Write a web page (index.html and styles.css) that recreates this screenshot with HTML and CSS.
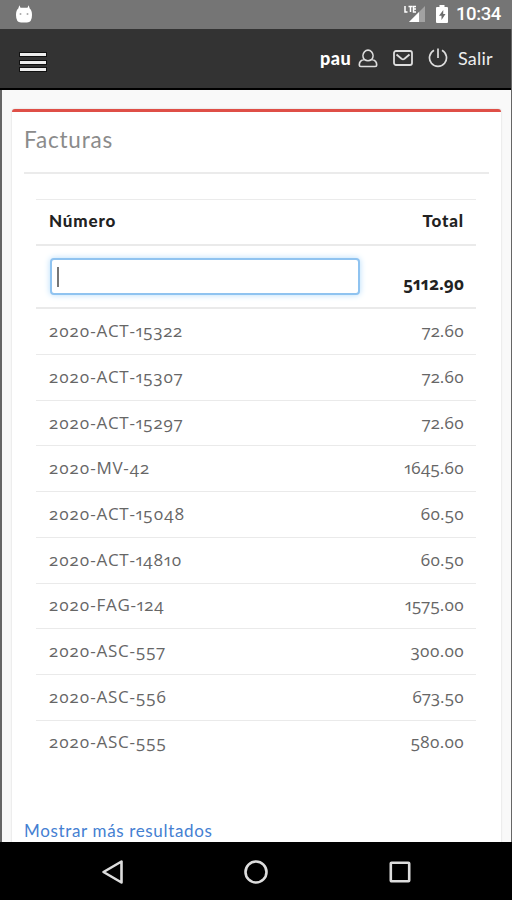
FILE: index.html
```html
<!DOCTYPE html>
<html lang="es">
<head>
<meta charset="utf-8">
<title>Facturas</title>
<link rel="stylesheet" href="styles.css">
</head>
<body>
<div class="phone">
  <div class="status">
    <svg class="bot" viewBox="0 0 18 20"><path d="M4.300 1.200l1.200 2.500h7l1.200-2.500 1 3.300Q17 6 17 11q0 7.500-5 7.500H6Q1 18.500 1 11 1 6 3.300 4.500z" fill="#fff"/><circle cx="5.500" cy="10" r="1" fill="#aaa"/><circle cx="12.500" cy="10" r="1" fill="#aaa"/></svg>
    <div class="status-right">
      <svg class="signal" viewBox="0 0 22 18"><path d="M1 1v6h2.500M4.500 1.500h4M6.500 1.500V7M12 1.500H9.500V7H12M9.500 4H12" fill="none" stroke="#fff" stroke-width="1.500"/><path d="M21 1v16H5z" fill="#a2a2a2"/><path d="M15 7v10H5z" fill="#fff"/></svg>
      <svg class="battery" viewBox="0 0 12 18"><path d="M3.500 0h5v2H11q1 0 1 1v14q0 1-1 1H1q-1 0-1-1V3q0-1 1-1h2.500z" fill="#fff"/><path d="M7.300 5L3 10.700h2.500V15l4-6H7.200z" fill="#6c6c6c"/></svg>
      <span class="clock">10:34</span>
    </div>
  </div>
  <header class="topbar">
    <div class="menu"><i></i><i></i><i></i></div>
    <nav class="tools">
      <b class="user">pau</b>
      <svg class="i-user" viewBox="0 0 20 20"><path d="M6.300 11.500A5 5.600 0 1 1 13.700 11.500C16.500 11.800 18.700 13.500 18.700 17Q18.700 18.500 17.200 18.500H2.800Q1.300 18.500 1.300 17C1.300 13.500 3.500 11.800 6.300 11.500Q10 14 13.700 11.500" fill="none" stroke="#ddd" stroke-width="1.700" stroke-linejoin="round"/></svg>
      <svg class="i-mail" viewBox="0 0 20 16"><rect x="1" y="1" width="18" height="14" rx="2" fill="none" stroke="#ddd" stroke-width="1.800"/><path d="M3.500 4.500l5 4.300q1.500 1 3 0l5-4.300" fill="none" stroke="#ddd" stroke-width="1.800"/></svg>
      <svg class="i-power" viewBox="0 0 20 20"><path d="M6 2.300a8.500 8.500 0 1 0 8 0M10 .5v9.500" fill="none" stroke="#ddd" stroke-width="1.700"/></svg>
      <span class="exit">Salir</span>
    </nav>
  </header>
  <main class="page">
    <section class="card">
      <h1>Facturas</h1>
      <div class="grid">
        <div class="row head"><span>Número</span><span>Total</span></div>
        <div class="row filter"><div class="field"><i></i></div><b>5112.90</b></div>
        <div class="row"><span class="id">2020-ACT-15322</span><span>72.60</span></div>
        <div class="row"><span class="id">2020-ACT-15307</span><span>72.60</span></div>
        <div class="row"><span class="id">2020-ACT-15297</span><span>72.60</span></div>
        <div class="row"><span class="id">2020-MV-42</span><span>1645.60</span></div>
        <div class="row"><span class="id">2020-ACT-15048</span><span>60.50</span></div>
        <div class="row"><span class="id">2020-ACT-14810</span><span>60.50</span></div>
        <div class="row"><span class="id">2020-FAG-124</span><span>1575.00</span></div>
        <div class="row"><span class="id">2020-ASC-557</span><span>300.00</span></div>
        <div class="row"><span class="id">2020-ASC-556</span><span>673.50</span></div>
        <div class="row"><span class="id">2020-ASC-555</span><span>580.00</span></div>
      </div>
      <a class="more">Mostrar más resultados</a>
    </section>
  </main>
  <footer class="navbar">
    <svg viewBox="0 0 26 26"><path d="M21.500 2.500v21L3.500 13z" fill="none" stroke="#ddd" stroke-width="2.600" stroke-linejoin="round"/></svg>
    <svg viewBox="0 0 26 26"><circle cx="13" cy="13" r="10.500" fill="none" stroke="#ddd" stroke-width="2.600"/></svg>
    <svg viewBox="0 0 26 26"><rect x="3.800" y="3.800" width="18.400" height="18.400" rx=".8" fill="none" stroke="#ddd" stroke-width="2.600"/></svg>
  </footer>
</div>
</body>
</html>
```
FILE: styles.css
```css
* { box-sizing: border-box; }
body { margin: 0; background: #666; font-family: "Open Sans", sans-serif; font-variant-numeric: oldstyle-nums proportional-nums; }
svg { display: block; flex: none; }
.phone { width: 512px; height: 900px; display: flex; flex-direction: column; overflow: hidden; }
.status { height: 29px; background: #757575; display: flex; align-items: center; justify-content: space-between; padding: 0 12px 0 15px; flex: none; }
.bot { width: 18px; height: 20px; margin-top: -2px; }
.status-right { display: flex; align-items: center; margin-top: -1px; }
.signal { width: 22px; height: 18px; margin-right: 10px; }
.battery { width: 12px; height: 18px; margin-right: 8px; }
.clock { font: 500 18.5px/29px Roboto, sans-serif; color: #fff; width: 44px; padding-top: 1px; letter-spacing: -.4px; }
.topbar { height: 61px; margin: 0 1px 0 0; background: #333; border-bottom: 2px solid #000; display: flex; justify-content: space-between; padding: 0 18px 0 20px; flex: none; }
.menu { width: 26px; padding-top: 24px; display: flex; flex-direction: column; gap: 4.500px; }
.menu i { display: block; height: 3px; background: #eee; box-shadow: 0 0 0 1px #111; flex: none; }
.tools { display: flex; align-items: center; height: 57px; color: #eee; font-family: Lato, sans-serif; font-size: 18px; }
.user { width: 33px; margin-right: 5px; color: #fff; font-weight: 900; letter-spacing: .5px; }
.i-user { width: 20px; height: 20px; margin-right: 15px; }
.i-mail { width: 20px; height: 16px; margin-right: 15px; }
.i-power { width: 20px; height: 20px; margin-right: 10px; }
.exit { width: 35px; letter-spacing: .2px; }
.page { flex: 1; min-height: 0; margin: 0 1px 0 2px; padding: 19px 10px 0; background: #f9f9f9; overflow: hidden; }
.card { height: 740px; background: #fff; border-top: 3px solid #df4f47; border-radius: 3px; box-shadow: 0 0 2px #ccc; padding: 0 12px; }
h1 { margin: 0 0 25px; height: 62px; border-bottom: 2px solid #ebebeb; font: 400 22.5px/56px Lato, sans-serif; color: #8b8b8b; letter-spacing: .8px; }
.grid { margin: 0 13px 0 12px; border-top: 1px solid #ebebeb; }
.row { height: 45.7px; padding: 0 12px 2px 13px; display: flex; justify-content: space-between; align-items: center; border-bottom: 1px solid #eaeaea; font-size: 17px; line-height: 23px; color: #666; }
.row:last-child { border-bottom: 0; padding-bottom: 3px; }
.id { letter-spacing: .75px; }
.head { height: 46.2px; padding-bottom: 3px; font-family: Lato, sans-serif; font-weight: 900; color: #222; font-size: 17px; letter-spacing: .85px; border-bottom-width: 2px; }
.filter { height: 63.200px; padding-left: 14px; padding-bottom: 0; color: #222; border-bottom-width: 2px; }
.filter b { padding-top: 14px; }
.field { width: 310px; height: 37px; border: 2px solid #8fc3f0; border-radius: 4px; box-shadow: 0 0 6px #b5dcfa; padding: 7px 5px; background: #fff; }
.field i { display: block; width: 2px; height: 20px; background: #777; }
.more { display: block; margin-top: 53px; font: 400 17px/24px Lato, sans-serif; color: #4580d2; letter-spacing: .65px; }
.navbar { height: 58px; background: #000; display: flex; justify-content: center; align-items: center; gap: 117.500px; flex: none; padding-top: 2px; }
.navbar svg { width: 26px; height: 26px; }
```
